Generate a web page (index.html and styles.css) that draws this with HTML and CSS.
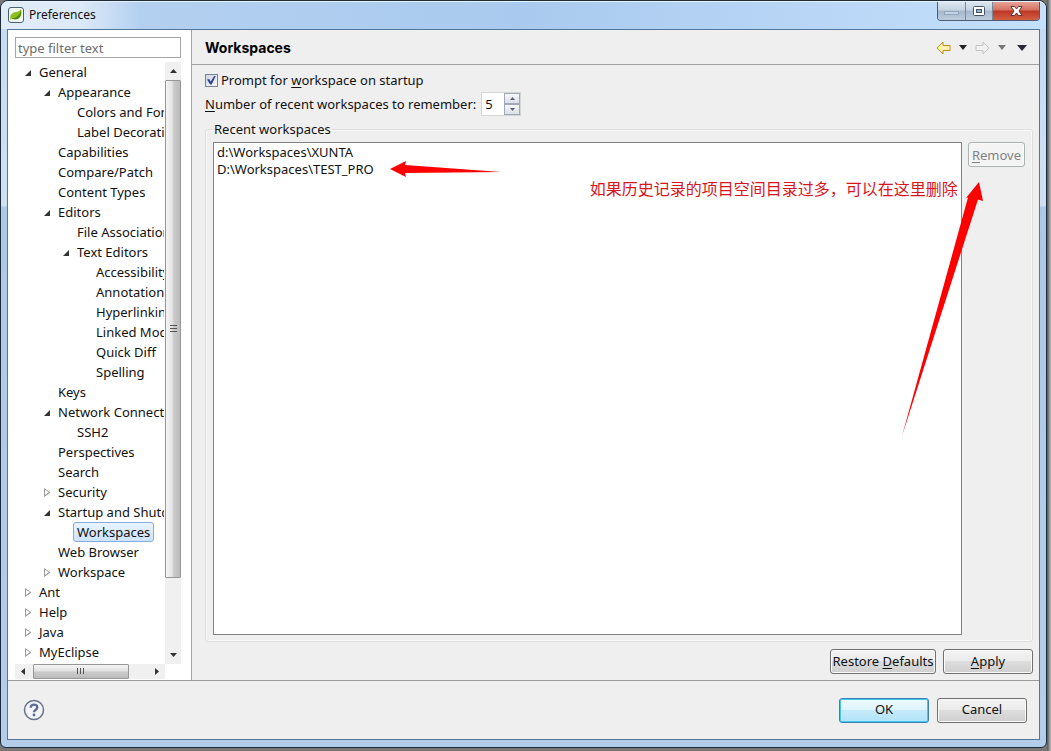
FILE: index.html
```html
<!DOCTYPE html>
<html lang="en">
<head>
<meta charset="utf-8">
<title>Preferences</title>
<link rel="stylesheet" href="styles.css">
</head>
<body>
<div class="window">
  <header class="titlebar">
    <svg class="app-icon" width="16" height="16" viewBox="0 0 16 16" aria-hidden="true">
      <rect x="0.5" y="0.5" width="15" height="15" rx="2.5" fill="#f4f8f4" stroke="#47606e"/>
      <path d="M2.500 12C1.500 8 4 5.500 8 5C11 4.500 12 3.500 13 2C14 7 12.500 11.500 7.500 12C5 12.300 4 12 3.500 11.500L2 13.500Z" fill="#8cc01c"/>
      <path d="M3 11.500C8 11.500 12 8 13 3C14 8 12 12.500 7 12.500Z" fill="#4d8c0a"/>
    </svg>
    <h1 class="title">Preferences</h1>
    <div class="controls">
      <button class="control" type="button" aria-label="Minimize"><svg width="27" height="18" viewBox="0 0 27 18"><rect x="6.500" y="9.500" width="14" height="3" fill="#c3d3e2" stroke="#94a7ba"/></svg></button>
      <button class="control control-max" type="button" aria-label="Maximize"><svg width="26" height="18" viewBox="0 0 26 18"><rect x="7.500" y="4.500" width="11" height="9" rx="1" fill="#fff" stroke="#465467"/><rect x="10.500" y="7.500" width="5" height="3" fill="#9cb2c8" stroke="#465467"/></svg></button>
      <button class="control control-close" type="button" aria-label="Close"><svg width="46" height="18" viewBox="0 0 46 18"><path d="M18 4.500H21.500L23.500 7L25.500 4.500H29L26 9L29 13.500H25.500L23.500 11L21.500 13.500H18L21 9Z" fill="#fff" stroke="#5b3434"/></svg></button>
    </div>
  </header>

  <div class="client">
    <div class="panes">
      <nav class="sidebar" aria-label="Preference pages">
        <input class="filter" type="text" placeholder="type filter text" aria-label="Filter">
        <div class="tree-frame">
          <ul class="tree">
            <li><span class="row open">General</span>
              <ul>
                <li><span class="row open">Appearance</span>
                  <ul>
                    <li><span class="row">Colors and Fonts</span></li>
                    <li><span class="row">Label Decorations</span></li>
                  </ul>
                </li>
                <li><span class="row">Capabilities</span></li>
                <li><span class="row">Compare/Patch</span></li>
                <li><span class="row">Content Types</span></li>
                <li><span class="row open">Editors</span>
                  <ul>
                    <li><span class="row">File Associations</span></li>
                    <li><span class="row open">Text Editors</span>
                      <ul>
                        <li><span class="row">Accessibility</span></li>
                        <li><span class="row">Annotations</span></li>
                        <li><span class="row">Hyperlinking</span></li>
                        <li><span class="row">Linked Mode</span></li>
                        <li><span class="row">Quick Diff</span></li>
                        <li><span class="row">Spelling</span></li>
                      </ul>
                    </li>
                  </ul>
                </li>
                <li><span class="row">Keys</span></li>
                <li><span class="row open">Network Connections</span>
                  <ul>
                    <li><span class="row">SSH2</span></li>
                  </ul>
                </li>
                <li><span class="row">Perspectives</span></li>
                <li><span class="row">Search</span></li>
                <li><span class="row closed">Security</span></li>
                <li><span class="row open">Startup and Shutdown</span>
                  <ul>
                    <li><span class="row"><span class="selected">Workspaces</span></span></li>
                  </ul>
                </li>
                <li><span class="row">Web Browser</span></li>
                <li><span class="row closed">Workspace</span></li>
              </ul>
            </li>
            <li><span class="row closed">Ant</span></li>
            <li><span class="row closed">Help</span></li>
            <li><span class="row closed">Java</span></li>
            <li><span class="row closed">MyEclipse</span></li>
          </ul>
          <div class="vscroll">
            <button type="button" class="scroll-button" aria-label="Scroll up"><svg width="7" height="4" viewBox="0 0 7 4"><path d="M0 4L3.500 0L7 4Z" fill="#333"/></svg></button>
            <div class="vtrack"><div class="vthumb"><svg width="7" height="8" viewBox="0 0 7 8"><path d="M0 0.500H7M0 3.500H7M0 6.500H7" stroke="#555"/></svg></div></div>
            <button type="button" class="scroll-button" aria-label="Scroll down"><svg width="7" height="4" viewBox="0 0 7 4"><path d="M0 0L3.500 4L7 0Z" fill="#333"/></svg></button>
          </div>
          <div class="hscroll">
            <button type="button" class="scroll-button" aria-label="Scroll left"><svg width="4" height="7" viewBox="0 0 4 7"><path d="M4 0L0 3.500L4 7Z" fill="#333"/></svg></button>
            <div class="htrack"><div class="hthumb"><svg width="8" height="7" viewBox="0 0 8 7"><path d="M0.500 0V6M3.500 0V6M6.500 0V6" stroke="#555"/></svg></div></div>
            <button type="button" class="scroll-button" aria-label="Scroll right"><svg width="4" height="7" viewBox="0 0 4 7"><path d="M0 0L4 3.500L0 7Z" fill="#333"/></svg></button>
          </div>
        </div>
      </nav>

      <main class="page">
        <div class="page-header">
          <h2>Workspaces</h2>
          <div class="history">
            <button type="button" aria-label="Back"><svg width="15" height="14" viewBox="0 0 15 14"><path d="M1 7L7 1V4.500H14V9.500H7V13Z" fill="#fff3ad" stroke="#bd8a22"/></svg></button>
            <button type="button" aria-label="Back history"><svg width="8" height="5" viewBox="0 0 8 5"><path d="M0 0H8L4 5Z" fill="#222"/></svg></button>
            <button type="button" class="forward" aria-label="Forward" disabled><svg width="15" height="14" viewBox="0 0 15 14"><path d="M14 7L8 1V4.500H1V9.500H8V13Z" fill="#f2f2f2" stroke="#c3c3c3"/></svg></button>
            <button type="button" aria-label="Forward history" disabled><svg width="8" height="5" viewBox="0 0 8 5"><path d="M0 0H8L4 5Z" fill="#777"/></svg></button>
            <button type="button" class="view-menu" aria-label="Menu"><svg width="10" height="6" viewBox="0 0 10 6"><path d="M0 0H10L5 6Z" fill="#2c2a38"/></svg></button>
          </div>
        </div>
        <div class="page-body">
          <label class="prompt"><input type="checkbox" checked><span>Prompt for <u>w</u>orkspace on startup</span></label>
          <div class="count-row">
            <label for="count"><u>N</u>umber of recent workspaces to remember:</label>
            <div class="spinner">
              <input id="count" type="text" value="5">
              <div class="spin-buttons">
                <button type="button" aria-label="Increase"><svg width="5" height="3" viewBox="0 0 5 3"><path d="M0 3L2.500 0L5 3Z" fill="#566078"/></svg></button>
                <button type="button" aria-label="Decrease"><svg width="5" height="3" viewBox="0 0 5 3"><path d="M0 0L2.500 3L5 0Z" fill="#566078"/></svg></button>
              </div>
            </div>
          </div>
          <fieldset class="group">
            <legend>Recent workspaces</legend>
            <div class="group-body">
              <div class="list">
                <ul>
                  <li>d:\Workspaces\XUNTA</li>
                  <li>D:\Workspaces\TEST_PRO</li>
                </ul>
                <svg class="arrow-small" width="114" height="18" viewBox="0 0 114 18" aria-hidden="true"><path d="M1 9L17 1L16 5L112 12L16 13L17 17Z" fill="#f00"/></svg>
                <p class="note" lang="zh">如果历史记录的项目空间目录过多，可以在这里删除</p>
              </div>
              <button type="button" class="button remove" disabled><span><u>R</u>emove</span></button>
              <svg class="arrow-large" width="84" height="256" viewBox="0 0 84 256" aria-hidden="true"><path d="M78 1L82 20L77 18.500L1 255L67 16.500L65 17Z" fill="#f00"/></svg>
            </div>
          </fieldset>
          <div class="page-actions">
            <button type="button" class="button restore"><span>Restore <u>D</u>efaults</span></button>
            <button type="button" class="button"><span><u>A</u>pply</span></button>
          </div>
        </div>
      </main>
    </div>

    <footer class="footer">
      <button type="button" class="help" aria-label="Help"><svg width="22" height="22" viewBox="0 0 22 22"><circle cx="11" cy="11" r="9.500" fill="#f3f5fb" stroke="#68738c" stroke-width="1.500"/><path d="M7.700 8.800C7.700 4.600 14.300 4.600 14.300 8.500C14.300 10.800 11 10.700 11 13.200" fill="none" stroke="#5c6c94" stroke-width="2.400"/><circle cx="11" cy="16" r="1.400" fill="#5c6c94"/></svg></button>
      <div class="dialog-actions">
        <button type="button" class="button default">OK</button>
        <button type="button" class="button">Cancel</button>
      </div>
    </footer>
  </div>
</div>
</body>
</html>
```
FILE: styles.css
```css
* { box-sizing: border-box; }
body {
  margin: 0;
  height: 100vh;
  padding: 0 4px 3px 0;
  background: linear-gradient(90deg, #777 0, #777 calc(100% - 4px), #555 calc(100% - 4px), #bbb 100%);
  font: 13px/20px "Noto Sans", "Noto Sans CJK SC", sans-serif;
  color: #111;
}
button, input { font: inherit; color: inherit; }
button { padding: 0; }
svg { display: block; }
ul { list-style: none; margin: 0; padding: 0; }
u { text-underline-offset: 2px; }

.window {
  display: flex;
  flex-direction: column;
  min-height: 100%;
  padding: 0 6px 7px;
  border: 1px solid #1d2b3c;
  border-radius: 8px 8px 6px 6px;
  background: linear-gradient(180deg, #c3dbf4 0, #cfe0f3 205px, #adc9e8 206px, #b4cdea 100%);
}
.titlebar {
  display: flex;
  align-items: center;
  gap: 5px;
  height: 28px;
  margin: 0 -6px;
  padding: 0 6px 2px 7px;
  border-top: 1px solid #eaf4ff;
  border-radius: 8px 8px 0 0;
  background: linear-gradient(90deg, #e2ecf8 0, #dce9f8 80px, #b3d0f0 140px, #a9caee 50%, #bdd9f8 85%, #c3e0ff 100%);
}
.title { margin: 0; font-size: 12px; font-weight: 400; }
.controls {
  display: flex;
  align-self: flex-start;
  margin-left: auto;
  border: 1px solid #4c5d71;
  border-top: 0;
  border-radius: 0 0 4px 4px;
  overflow: hidden;
}
.control {
  border: 0;
  border-right: 1px solid #74879b;
  background: linear-gradient(#dce6ef 0, #c4d3e1 45%, #a4b8ca 50%, #bccddd 100%);
}
.control-close {
  border-right: 0;
  background: linear-gradient(#e5a497 0, #d5705e 45%, #bd3524 50%, #d55f45 100%);
}

.client {
  display: flex;
  flex: 1;
  flex-direction: column;
  border: 1px solid #53779b;
  background: #efefef;
}
.panes { display: flex; flex: 1; border-bottom: 1px solid #9a9a9a; }
.sidebar {
  display: flex;
  flex-direction: column;
  gap: 4px;
  width: 184px;
  padding: 7px 10px 1px 7px;
  border-right: 1px solid #a5a5a5;
  background: #fff;
}
.filter {
  width: 100%;
  height: 21px;
  padding: 0 2px;
  border: 1px solid #a5a5a5;
  background: #fff;
  line-height: 18px;
}
.filter::placeholder { color: #6d6d6d; opacity: 1; }
.tree-frame {
  display: grid;
  flex: 1;
  grid-template-columns: minmax(0, 1fr) 16px;
  grid-template-rows: 1fr 15px;
}
.tree { overflow: hidden; margin-right: 1px; padding-left: 24px; white-space: nowrap; }
.tree ul { padding-left: 19px; }
.row { position: relative; display: block; height: 20px; }
.open::before, .closed::before {
  content: "";
  position: absolute;
  top: 8px;
  left: -14px;
  width: 6px;
  height: 6px;
  background: #333;
  clip-path: polygon(100% 0, 100% 100%, 0 100%);
}
.closed::before {
  top: 6px;
  width: 6px;
  height: 9px;
  background: #999;
  clip-path: polygon(evenodd, 0 0, 6px 4px, 6px 5px, 0 9px, 0 0, 1px 2px, 1px 7px, 5px 4px, 1px 2px);
}
.selected {
  display: inline-block;
  height: 20px;
  margin-left: -4px;
  padding: 0 3px;
  border: 1px solid #84acdd;
  border-radius: 3px;
  background: linear-gradient(#eaf4ff, #cde3fc);
  line-height: 18px;
}
.scroll-button {
  display: grid;
  place-items: center;
  width: 16px;
  height: 18px;
  border: 0;
  background: #f0f0f0;
}
.vscroll { display: flex; flex-direction: column; background: #f0f0f0; }
.vtrack { flex: 1; }
.vthumb {
  display: grid;
  place-items: center;
  height: 88%;
  border: 1px solid #979797;
  border-radius: 1px;
  background: linear-gradient(90deg, #f5f5f5, #e2e2e2 45%, #cacaca 55%, #bcbcbc);
}
.hscroll { display: flex; background: #f0f0f0; }
.hscroll .scroll-button { height: 15px; }
.htrack { flex: 1; padding-left: 2px; }
.hthumb {
  display: grid;
  place-items: center;
  width: 83%;
  height: 15px;
  border: 1px solid #979797;
  border-radius: 1px;
  background: linear-gradient(#f5f5f5, #e2e2e2 45%, #cacaca 55%, #bcbcbc);
}

.page { display: flex; flex: 1; flex-direction: column; min-width: 0; }
.page-header {
  display: flex;
  align-items: center;
  justify-content: space-between;
  height: 35px;
  padding: 1px 12px 0 13px;
  border-bottom: 1px solid #a0a0a0;
}
.page-header h2 { margin: 0; font: 700 14px/20px Inter, sans-serif; color: #000; }
.history { display: flex; align-items: center; gap: 8px; }
.history button { border: 0; background: none; }
.history .view-menu { margin-left: 3px; }
.page-body {
  display: flex;
  flex: 1;
  flex-direction: column;
  padding: 5px 6px 6px 13px;
}
.prompt { display: flex; align-items: center; gap: 3px; }
.prompt input {
  appearance: none;
  width: 13px;
  height: 13px;
  margin: 0;
  border: 1px solid #7c8298;
  background: linear-gradient(135deg, #cfd5e4, #f7f8fb);
}
.prompt input:checked::before {
  content: "";
  display: block;
  width: 9px;
  height: 9px;
  margin: 1px;
  background: #31479b;
  clip-path: polygon(0 45%, 25% 40%, 42% 67%, 82% 0, 100% 0, 52% 100%, 35% 100%);
}
.count-row { display: flex; align-items: center; gap: 5px; margin-top: 2px; }
.spinner { display: flex; width: 40px; height: 24px; border: 1px solid #d5d5d5; background: #fff; }
.spinner input { flex: 1; min-width: 0; padding: 0 3px; border: 0; background: none; }
.spin-buttons { display: flex; flex-direction: column; width: 16px; }
.spin-buttons button {
  display: grid;
  flex: 1;
  place-items: center;
  border: 1px solid #a1a8b8;
  background: linear-gradient(#f8f8fa, #dcdfe7);
}
.group {
  display: flex;
  flex: 1;
  flex-direction: column;
  min-width: 0;
  margin: 3px 0 0;
  padding: 3px 7px 6px;
  border: 1px solid #dfdfdf;
  border-radius: 3px;
  box-shadow: inset 0 0 0 1px #f8f8f8;
}
.group legend { padding: 0 1px; }
.group-body { position: relative; display: flex; gap: 6px; height: 100%; }
.list {
  position: relative;
  flex: 1;
  border: 1px solid #828282;
  background: #fff;
}
.list ul { padding: 1px 3px; line-height: 17px; }
.arrow-small { position: absolute; top: 17px; left: 175px; }
.note {
  position: absolute;
  top: 33px;
  right: 3px;
  margin: 0;
  font: 16px/24px "Noto Sans CJK SC", sans-serif;
  color: #d9141c;
  white-space: nowrap;
}
.arrow-large { position: absolute; top: 39px; right: 40px; }
.button {
  min-width: 90px;
  height: 25px;
  padding: 0 4px 2px;
  border: 1px solid #707070;
  border-radius: 3px;
  background: linear-gradient(#f3f3f3 0, #ebebeb 48%, #dddddd 50%, #cfcfcf 100%);
  box-shadow: inset 0 0 0 1px #fafafa;
}
.remove {
  min-width: 57px;
  padding: 0 3px;
  border-color: #adb2b5;
  background: #f4f4f4;
  color: #838383;
}
.restore { min-width: 106px; padding: 0 1px 2px; }
.page-actions { display: flex; justify-content: flex-end; gap: 7px; padding-top: 7px; }
.footer {
  display: flex;
  align-items: center;
  justify-content: space-between;
  height: 58px;
  padding: 0 12px 0 15px;
}
.help { border: 0; background: none; }
.dialog-actions { display: flex; gap: 8px; }
.default {
  border-color: #3c7fb1;
  background: linear-gradient(#effaff 0, #ddf4fd 48%, #c5ebfa 50%, #b2e3f8 100%);
  box-shadow: inset 0 0 0 1px #43c8f0;
}
```
